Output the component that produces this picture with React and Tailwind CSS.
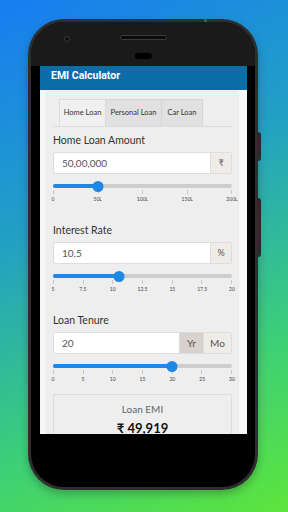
import React from "react";

const sliders = [
  { label: "Home Loan Amount", value: "50,00,000", pct: 25, ticks: ["0", "50L", "100L", "150L", "200L"], unit: "₹" },
  { label: "Interest Rate", value: "10.5", pct: 36.7, ticks: ["5", "7.5", "10", "12.5", "15", "17.5", "20"], unit: "%" },
  { label: "Loan Tenure", value: "20", pct: 66.7, ticks: ["0", "5", "10", "15", "20", "25", "30"], unit: null },
];

const Slider = ({ pct, ticks }) => (
  <div className="mt-[8px]">
    {/* Track */}
    <div className="relative h-[8px] flex items-center">
      <div className="w-full h-[4px] rounded-full bg-[#cdcdcd]" />
      <div className="absolute left-0 h-[4px] rounded-full bg-[#1f87e6]" style={{ width: `${pct}%` }} />
      <div
        className="absolute w-[11px] h-[11px] rounded-full bg-[#1f87e6] -translate-x-1/2"
        style={{ left: `${pct}%` }}
      />
    </div>
    {/* Ticks */}
    <div className="flex justify-between h-[4px]">
      {ticks.map((t) => (
        <div key={t} className="w-px h-full bg-[#c8c8c8]" />
      ))}
    </div>
    {/* Tick labels */}
    <div className="flex justify-between mt-[2px] h-[6px]">
      {ticks.map((t) => (
        <div key={t} className="w-0 flex justify-center">
          <span className="text-[5px] leading-[6px] text-[#444] whitespace-nowrap">{t}</span>
        </div>
      ))}
    </div>
  </div>
);

const App = () => {
  return (
    <div className="w-[288px] h-[512px] overflow-hidden bg-[linear-gradient(155deg,#177df2_0%,#22a0c4_38%,#3ccf78_72%,#5de53c_100%)] pt-[19px] pl-[28px]">
      {/* Phone */}
      <div className="relative w-[230px] h-[471px] rounded-[36px] bg-[#2e2e2e] p-[3px] shadow-[0_4px_8px_rgba(0,0,0,0.25)]">
        {/* Side buttons */}
        <div className="absolute right-[-3px] top-[113px] w-[3px] h-[29px] rounded-r-sm bg-[#2a2a2a]" />
        <div className="absolute right-[-3px] top-[179px] w-[3px] h-[59px] rounded-r-sm bg-[#2a2a2a]" />
        <div className="absolute left-[176px] top-0 w-[3px] h-[3px] bg-[#555]" />

        <div className="h-full rounded-[33px] bg-black overflow-hidden flex flex-col">
          {/* Top bezel */}
          <div className="relative h-[44px] bg-[#1a1a1a] shrink-0">
            <div className="absolute left-[33px] top-[14px] w-[6px] h-[6px] rounded-full bg-[#0d0d0d] border border-[#3a3a3a]" />
            <div className="absolute left-[89px] top-[13px] w-[47px] h-[5px] rounded-full bg-[#0b0b0b] border border-[#3c3c3c]" />
            <div className="absolute left-[104px] top-[31px] w-[17px] h-[6px] rounded-full bg-black" />
          </div>

          {/* Screen */}
          <div className="ml-[9px] w-[207px] h-[368px] bg-[#f7f7f7] overflow-hidden flex flex-col shrink-0">
            <div className="h-[24px] bg-[#0a6da7] flex items-center pl-[11px] pb-[4px] shrink-0">
              <span className="text-white font-bold text-[10.5px] font-['Roboto',sans-serif]">EMI Calculator</span>
            </div>

            <div className="ml-[7px] mr-[9px] mt-[2px] bg-[#eeeeee] shadow-[0_0_2px_rgba(0,0,0,0.15)] px-[6px] pt-[7px] font-['Lato',sans-serif] text-[#333]">
              {/* Tabs */}
              <div className="flex pl-[6px] border-b border-[#dcdcdc]">
                <div className="w-[47px] h-[27px] flex items-center justify-center bg-[#f0f0f0] border border-b-0 border-[#dadada] text-[7.5px] text-[#333]">
                  Home Loan
                </div>
                <div className="w-[56px] h-[27px] flex items-center justify-center bg-[#e1e1e1] border-t border-r border-[#d6d6d6] text-[7.5px] text-[#333]">
                  Personal Loan
                </div>
                <div className="w-[41px] h-[27px] flex items-center justify-center bg-[#e1e1e1] border-t border-r border-[#d6d6d6] text-[7.5px] text-[#333]">
                  Car Loan
                </div>
              </div>

              {sliders.map((s, i) => (
                <div key={s.label} className={i === 0 ? "mt-[7px]" : "mt-[22px]"}>
                  <div className="text-[10.5px] leading-[13px] text-[#333]">{s.label}</div>
                  <div className="mt-[5px] h-[22px] flex bg-white border border-[#dddddd] rounded-[2px] overflow-hidden">
                    <div className="flex-1 flex items-center pl-[8px] text-[10px] text-[#555]">{s.value}</div>
                    {s.unit ? (
                      <div className="w-[21px] flex items-center justify-center bg-[#efebe7] border-l border-[#dddddd] text-[9px] text-[#555]">
                        {s.unit}
                      </div>
                    ) : (
                      <>
                        <div className="w-[24px] flex items-center justify-center bg-[#d9d1cc] border-l border-[#dddddd] text-[10px] text-[#555]">
                          Yr
                        </div>
                        <div className="w-[28px] flex items-center justify-center bg-[#efebe7] border-l border-[#dddddd] text-[10px] text-[#555]">
                          Mo
                        </div>
                      </>
                    )}
                  </div>
                  <Slider pct={s.pct} ticks={s.ticks} />
                </div>
              ))}

              {/* Result */}
              <div className="mt-[12px] border border-[#dcdcdc] rounded-[2px] bg-[#eeeeee] flex flex-col items-center pt-[8px] pb-[10px]">
                <div className="text-[10px] leading-[13px] text-[#666]">Loan EMI</div>
                <div className="mt-[4px] text-[13px] leading-[16px] font-bold text-[#111]">₹ 49,919</div>
              </div>
            </div>
          </div>
        </div>
      </div>
    </div>
  );
};

export default App;
